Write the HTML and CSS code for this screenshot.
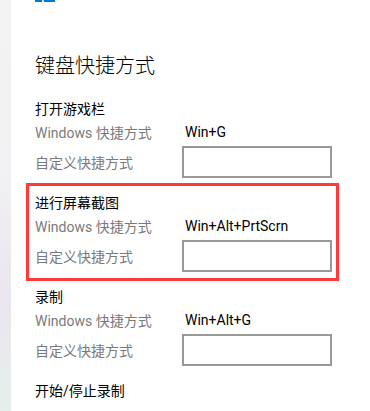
FILE: index.html
```html
<!DOCTYPE html>
<html lang="zh">
<head>
<meta charset="utf-8">
<link rel="stylesheet" href="styles.css">
</head>
<body>
<div class="page">
  <div class="strip"></div>
  <div class="main">
    <div class="toggle"><span class="dot"></span></div>
    <h1 class="heading">键盘快捷方式</h1>

    <div class="section">
      <div class="title">打开游戏栏</div>
      <div class="row win-row"><span class="label">Windows 快捷方式</span><span class="value">Win+G</span></div>
      <div class="row box-row"><span class="label">自定义快捷方式</span><span class="box"></span></div>
    </div>

    <div class="highlight">
      <div class="section">
        <div class="title">进行屏幕截图</div>
        <div class="row win-row"><span class="label">Windows 快捷方式</span><span class="value">Win+Alt+PrtScrn</span></div>
        <div class="row box-row"><span class="label">自定义快捷方式</span><span class="box"></span></div>
      </div>
    </div>

    <div class="section after-highlight">
      <div class="title">录制</div>
      <div class="row win-row"><span class="label">Windows 快捷方式</span><span class="value">Win+Alt+G</span></div>
      <div class="row box-row"><span class="label">自定义快捷方式</span><span class="box"></span></div>
    </div>

    <div class="section last">
      <div class="title">开始/停止录制</div>
    </div>
  </div>
</div>
</body>
</html>
```
FILE: styles.css
```css
html, body {
  margin: 0;
  padding: 0;
  background: #ffffff;
  overflow: hidden;
}
body {
  font-family: Roboto, "Noto Sans CJK SC", sans-serif;
  color: #000;
}
.page {
  display: flex;
  width: 370px;
  height: 411px;
  overflow: hidden;
}
.strip {
  width: 11px;
  flex: none;
  background: linear-gradient(#f3f3f3 0%, #f1f0f2 45%, #ebe5ef 72%, #e5efeb 100%);
}
.main {
  padding-left: 24px;
  display: flex;
  flex-direction: column;
}
.toggle {
  width: 20px;
  height: 5px;
  background: #0078d7;
  position: relative;
}
.dot {
  position: absolute;
  left: 7px;
  top: 0;
  width: 2px;
  height: 2px;
  background: #cfe4f7;
}
.heading {
  margin: 50px 0 0;
  font-size: 20px;
  font-weight: 300;
  line-height: 28px;
  height: 28px;
}
.section {
  margin-top: 19px;
  height: 79px;
  width: 297px;
}
.title {
  font-size: 14px;
  line-height: 20px;
  height: 20px;
}
.row {
  display: flex;
  align-items: center;
  font-size: 14px;
}
.win-row {
  height: 26px;
}
.box-row {
  margin-top: 1px;
  height: 32px;
}
.label {
  width: 147px;
  flex: none;
  color: #7a7a7a;
}
.value {
  padding-left: 3px;
}
.box {
  width: 150px;
  height: 32px;
  box-sizing: border-box;
  border: 2px solid #999999;
}
.highlight {
  margin: 5px 0 0 -9px;
  border: 3px solid #ff3a3a;
  padding: 7px 4px 6px 6px;
  width: 297px;
}
.highlight .section {
  margin-top: 0;
}
.section.after-highlight {
  margin-top: 6px;
}
.section.last {
  margin-top: 15px;
}
```
